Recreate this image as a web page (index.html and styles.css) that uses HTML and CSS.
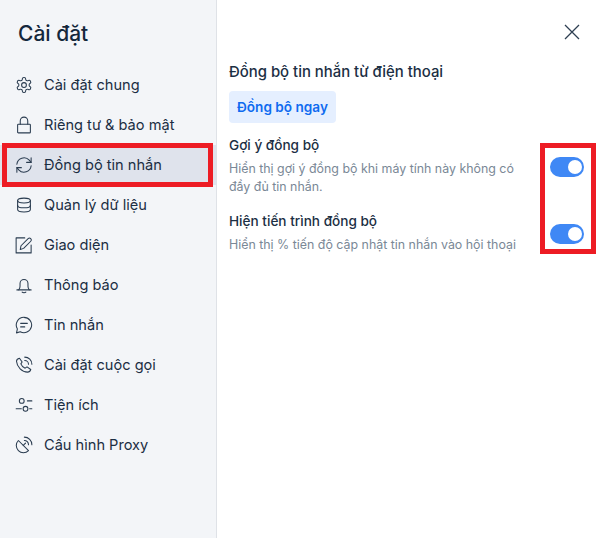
FILE: index.html
```html
<!DOCTYPE html>
<html lang="vi">
<head>
    <meta charset="UTF-8">
    <title>Cài đặt</title>
    <link rel="stylesheet" href="styles.css">
</head>
<body>
<div class="window">
    <aside class="sidebar">
        <h1 class="sidebar-title">Cài đặt</h1>
        <nav class="menu">
            <div class="menu-item">
                <svg class="icon" viewBox="0 0 24 24"><path d="M12.22 2h-.44a2 2 0 0 0-2 2v.18a2 2 0 0 1-1 1.73l-.43.25a2 2 0 0 1-2 0l-.15-.08a2 2 0 0 0-2.73.73l-.22.38a2 2 0 0 0 .73 2.73l.15.1a2 2 0 0 1 1 1.72v.51a2 2 0 0 1-1 1.74l-.15.09a2 2 0 0 0-.73 2.73l.22.38a2 2 0 0 0 2.73.73l.15-.08a2 2 0 0 1 2 0l.43.25a2 2 0 0 1 1 1.73V20a2 2 0 0 0 2 2h.44a2 2 0 0 0 2-2v-.18a2 2 0 0 1 1-1.73l.43-.25a2 2 0 0 1 2 0l.15.08a2 2 0 0 0 2.73-.73l.22-.39a2 2 0 0 0-.73-2.73l-.15-.08a2 2 0 0 1-1-1.74v-.5a2 2 0 0 1 1-1.74l.15-.09a2 2 0 0 0 .73-2.73l-.22-.38a2 2 0 0 0-2.73-.73l-.15.08a2 2 0 0 1-2 0l-.43-.25a2 2 0 0 1-1-1.73V4a2 2 0 0 0-2-2z"/><circle cx="12" cy="12" r="3.2"/></svg>
                <span>Cài đặt chung</span>
            </div>
            <div class="menu-item">
                <svg class="icon" viewBox="0 0 24 24"><rect x="3.5" y="11" width="17" height="11.5" rx="1"/><path d="M7 11V6.500a5 5 0 0 1 10 0V11"/></svg>
                <span>Riêng tư &amp; bảo mật</span>
            </div>
            <div class="menu-item active">
                <svg class="icon" viewBox="0 0 24 24"><path d="M2.500 11a9.500 9.500 0 0 1 16.500-5.500l2.500 3"/><path d="M21.500 2.500v6h-6"/><path d="M21.500 13a9.500 9.500 0 0 1-16.500 5.500l-2.500-3"/><path d="M2.500 21.500v-6h6"/></svg>
                <span>Đồng bộ tin nhắn</span>
            </div>
            <div class="menu-item">
                <svg class="icon" viewBox="0 0 24 24"><ellipse cx="12" cy="6" rx="8.500" ry="3.200"/><path d="M3.500 6v12c0 1.800 3.800 3.200 8.500 3.200s8.500-1.400 8.500-3.200V6"/><path d="M3.500 12.500c0 1.800 3.800 3.200 8.500 3.200s8.500-1.400 8.500-3.200"/></svg>
                <span>Quản lý dữ liệu</span>
            </div>
            <div class="menu-item">
                <svg class="icon" viewBox="0 0 24 24"><path d="M13 2.500H1.500v20h20V12"/><path d="M7 18l1-5L17.500 3.500a2.400 2.400 0 0 1 3.500 3.500L11.500 16.500z"/></svg>
                <span>Giao diện</span>
            </div>
            <div class="menu-item">
                <svg class="icon" viewBox="0 0 24 24"><path d="M2.500 18.500h19"/><path d="M5 18.500c1.200-1.500 1.700-3 1.700-5v-3.500a5.300 5.300 0 0 1 10.600 0v3.500c0 2 .5 3.500 1.700 5"/><path d="M9.500 21.500c1 1 4 1 5 0"/></svg>
                <span>Thông báo</span>
            </div>
            <div class="menu-item">
                <svg class="icon" viewBox="0 0 24 24"><path d="M12 1.800a10.200 10.200 0 1 1-5 19.100L2 22.500l1.200-5.200A10.200 10.200 0 0 1 12 1.800z"/><path d="M7.500 9.800h9"/><path d="M7.500 14.500h5.500"/></svg>
                <span>Tin nhắn</span>
            </div>
            <div class="menu-item">
                <svg class="icon" viewBox="0 0 24 24"><path d="M6 3l3.500 5-1.700 2.500c1 2.500 3.200 4.700 5.700 5.700l2.500-1.700 5 3.500c-.5 2-2.300 3.500-4.300 3.500C9.500 21.500 2.500 14.500 2 7c0-2 2-3.500 4-4z"/><path d="M13 1.500a9.500 9.500 0 0 1 9.500 9.500"/><path d="M13 6a5 5 0 0 1 5 5"/></svg>
                <span>Cài đặt cuộc gọi</span>
            </div>
            <div class="menu-item">
                <svg class="icon" viewBox="0 0 24 24"><circle cx="9" cy="6.500" r="3.200"/><circle cx="14" cy="17" r="3.200"/><path d="M16.500 6.500h6"/><path d="M1.500 17h7"/><path d="M19.500 17h3"/></svg>
                <span>Tiện ích</span>
            </div>
            <div class="menu-item">
                <svg class="icon" viewBox="0 0 24 24"><path d="M4.500 6L18 19.500A9.500 9.500 0 0 1 4.500 6z"/><path d="M11 12.500l3-3"/><path d="M12.500 1.500a10 10 0 0 1 10 10"/><path d="M12.500 6a5.500 5.500 0 0 1 5.500 5.500"/></svg>
                <span>Cấu hình Proxy</span>
            </div>
        </nav>
    </aside>

    <main class="content">
        <div class="content-top">
            <svg class="close" viewBox="0 0 16 16"><path d="M1 1l14 14M15 1L1 15"/></svg>
        </div>
        <h2 class="section-title">Đồng bộ tin nhắn từ điện thoại</h2>
        <button class="sync-btn">Đồng bộ ngay</button>

        <div class="option first">
            <div class="option-text">
                <div class="option-name">Gợi ý đồng bộ</div>
                <div class="option-desc">Hiển thị gợi ý đồng bộ khi máy tính này không có đầy đủ tin nhắn.</div>
            </div>
            <div class="toggle"><div class="knob"></div></div>
        </div>
        <div class="option last">
            <div class="option-text">
                <div class="option-name">Hiện tiến trình đồng bộ</div>
                <div class="option-desc">Hiển thị % tiến độ cập nhật tin nhắn vào hội thoại</div>
            </div>
            <div class="toggle"><div class="knob"></div></div>
        </div>
    </main>

    <div class="mark mark-menu"></div>
    <div class="mark mark-toggles"></div>
</div>
</body>
</html>
```

FILE: styles.css
```css
* {
    box-sizing: border-box;
}

body {
    margin: 0;
    padding: 0;
    background: #fff;
    font-family: Inter, "Noto Sans", sans-serif;
    color: #1f3247;
}

.window {
    position: relative;
    display: flex;
    width: 602px;
    height: 538px;
    overflow: hidden;
}

.sidebar {
    width: 217px;
    flex-shrink: 0;
    background: #f3f5f8;
    border-right: 1px solid #dfe2e7;
}

.sidebar-title {
    margin: 0;
    padding: 21px 18px 0;
    height: 65px;
    font-size: 21px;
    line-height: 26px;
    font-weight: 500;
    color: #14283c;
}

.menu-item {
    display: flex;
    align-items: center;
    gap: 11px;
    height: 40px;
    padding-left: 15px;
    font-size: 14.6px;
    font-weight: 420;
    color: #1b2e43;
}

.menu-item.active {
    background: #dfe3ec;
}

.icon {
    width: 18px;
    height: 18px;
    flex-shrink: 0;
    fill: none;
    stroke: #2a3c50;
    stroke-width: 1.4;
    stroke-linejoin: round;
    stroke-linecap: round;
}

.content {
    flex: 1;
    padding: 0 18px 0 12px;
}

.content-top {
    display: flex;
    justify-content: flex-end;
    padding: 24px 4px 0 0;
    height: 62px;
}

.close {
    width: 16px;
    height: 16px;
    fill: none;
    stroke: #2e3f52;
    stroke-width: 1.3;
}

.section-title {
    margin: 0;
    font-size: 14.9px;
    line-height: 20px;
    font-weight: 500;
    color: #1c2f44;
}

.sync-btn {
    display: block;
    height: 32px;
    margin-top: 9px;
    padding: 0 8px;
    border: none;
    border-radius: 4px;
    background: #e5efff;
    color: #0f6bf0;
    font-family: inherit;
    font-size: 13.6px;
    font-weight: 600;
}

.option {
    display: flex;
    align-items: center;
    justify-content: space-between;
    margin-top: 16px;
}

.option.first {
    margin-top: 13px;
}

.option.last {
    padding-bottom: 3px;
}

.option-text {
    width: 290px;
}

.option-name {
    font-size: 13.6px;
    line-height: 18px;
    font-weight: 500;
    color: #1c2f44;
}

.option-desc {
    margin-top: 6px;
    font-size: 12.4px;
    line-height: 18px;
    color: #7a8896;
}

.toggle {
    display: flex;
    align-items: center;
    justify-content: flex-end;
    width: 34px;
    height: 20px;
    margin-top: 2px;
    padding-right: 2px;
    border-radius: 10px;
    background: #3f88f5;
}

.knob {
    width: 14px;
    height: 14px;
    border-radius: 50%;
    background: #fff;
}

.mark {
    position: absolute;
    border: 5px solid #ed1c24;
}

.mark-menu {
    left: 2px;
    top: 143px;
    width: 211px;
    height: 44px;
}

.mark-toggles {
    left: 540px;
    top: 143px;
    width: 56px;
    height: 111px;
}
```
